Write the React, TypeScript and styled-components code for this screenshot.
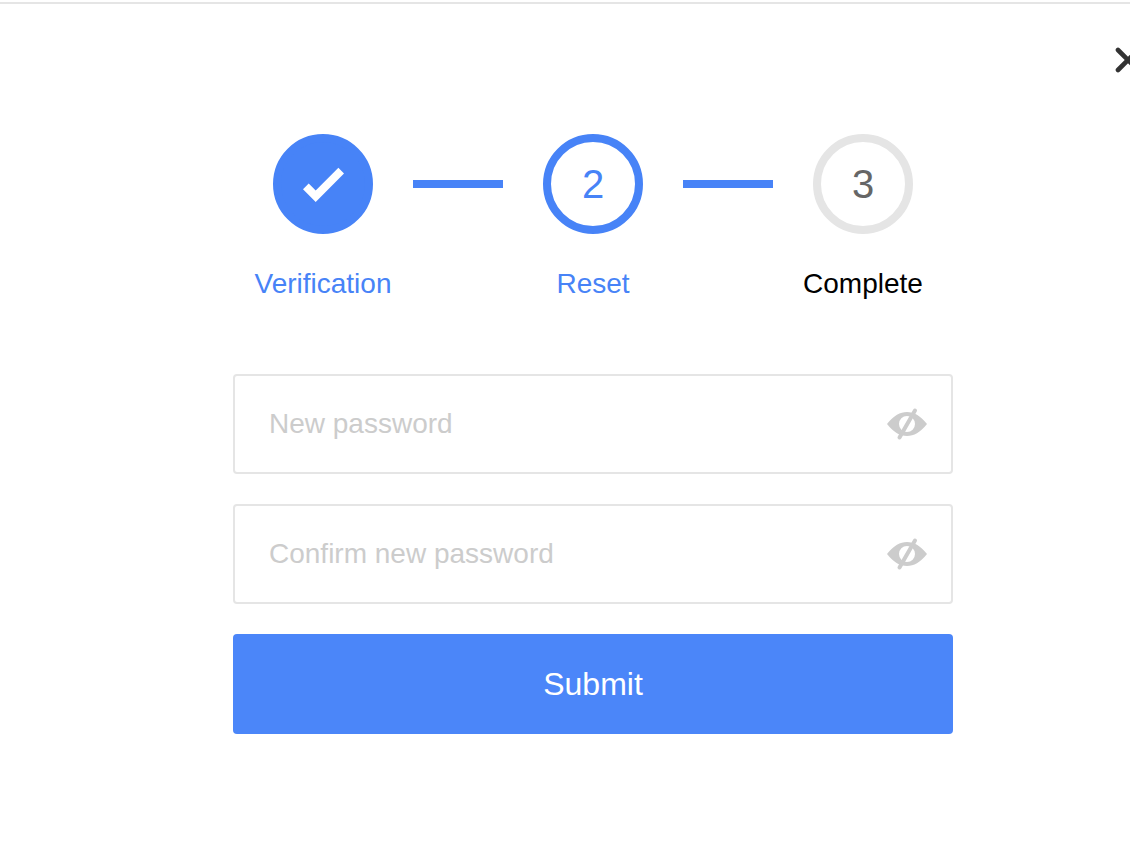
import React, { useState } from "react";
import styled, { createGlobalStyle } from "styled-components";

const GlobalStyle = createGlobalStyle`
  *, *::before, *::after { box-sizing: border-box; }
  body {
    margin: 0;
    background: #fff;
    font-family: "Liberation Sans", Arial, sans-serif;
    overflow-x: hidden;
  }
`;

const blue = "#4783f7";
const line = "#e5e5e5";

const Page = styled.main`
  overflow: hidden;
  padding-top: 2px;
`;

const Dialog = styled.section`
  display: flex;
  flex-direction: column;
  width: calc(100% + 56px);
  padding-bottom: 112px;
  border-top: 2px solid ${line};
`;

const Header = styled.header`
  display: flex;
  justify-content: flex-end;
  padding: 40px 42px 0;
`;

const CloseButton = styled.button`
  display: flex;
  padding: 0;
  border: 0;
  background: none;
  color: #333;
  cursor: pointer;
`;

const Content = styled.div`
  width: 100%;
  max-width: 720px;
  margin: 58px auto 0;
`;

const Steps = styled.ol`
  display: grid;
  grid-template-columns: 2fr 1fr 2fr 1fr 2fr;
  margin: 0;
  padding: 0;
  list-style: none;
`;

const Step = styled.li<{ $active?: boolean }>`
  display: flex;
  flex-direction: column;
  align-items: center;
  gap: 32px;
  color: ${(p) => (p.$active ? blue : "#000")};
  font-size: 28px;
  line-height: 36px;
`;

const Marker = styled.span<{ $state: "done" | "current" | "next" }>`
  display: flex;
  align-items: center;
  justify-content: center;
  width: 100px;
  height: 100px;
  border: 8px solid ${(p) => (p.$state === "next" ? line : blue)};
  border-radius: 50%;
  background: ${(p) => (p.$state === "done" ? blue : "#fff")};
  color: ${(p) => (p.$state === "next" ? "#666" : blue)};
  font-size: 40px;
  line-height: 48px;
`;

const Connector = styled.li`
  height: 8px;
  margin-top: 46px;
  background: ${blue};
`;

const Form = styled.form`
  display: flex;
  flex-direction: column;
  gap: 30px;
  margin-top: 72px;
`;

const Field = styled.div`
  display: flex;
  align-items: center;
  height: 100px;
  padding: 0 24px 0 34px;
  border: 2px solid ${line};
  border-radius: 4px;
`;

const Input = styled.input`
  flex: 1;
  min-width: 0;
  height: 100%;
  padding: 0;
  border: 0;
  outline: 0;
  background: none;
  color: #333;
  font-family: inherit;
  font-size: 28px;

  &::placeholder {
    color: #ccc;
    opacity: 1;
  }
`;

const ToggleButton = styled.button`
  display: flex;
  padding: 0;
  border: 0;
  background: none;
  color: #ccc;
  cursor: pointer;
`;

const SubmitButton = styled.button`
  height: 100px;
  border: 0;
  border-radius: 4px;
  background: #4b86f9;
  color: #fff;
  font-family: inherit;
  font-size: 32px;
  cursor: pointer;
`;

function CheckIcon() {
  return (
    <svg width="42" height="36" viewBox="0 0 42 36" role="img" aria-label="Done">
      <path fill="#fff" d="M1 23.200 6.700 17.400 13.700 24.500 36.400 1.800 42 7.400 13.700 36z" />
    </svg>
  );
}

function CloseIcon() {
  return (
    <svg width="32" height="32" viewBox="0 0 32 32" aria-hidden="true">
      <path
        d="M6 6 26 26M26 6 6 26"
        stroke="currentColor"
        strokeWidth="4.600"
        strokeLinecap="round"
      />
    </svg>
  );
}

function EyeIcon({ slashed }: { slashed: boolean }) {
  return (
    <svg width="40" height="36" viewBox="0 0 40 36" aria-hidden="true">
      <path
        fill="currentColor"
        fillRule="evenodd"
        d="M0 18C7 9.500 13 6 20 6S33 9.500 40 18C33 26.500 27 30 20 30S7 26.500 0 18zM20 10a8 8 0 1 0 0 16 8 8 0 0 0 0-16z"
      />
      {slashed && (
        <path d="M28 4.500 12.500 31.500" stroke="currentColor" strokeWidth="4" strokeLinecap="round" />
      )}
    </svg>
  );
}

function PasswordField({ label, name }: { label: string; name: string }) {
  const [visible, setVisible] = useState(false);
  return (
    <Field>
      <Input
        type={visible ? "text" : "password"}
        name={name}
        placeholder={label}
        aria-label={label}
        autoComplete="new-password"
      />
      <ToggleButton
        type="button"
        aria-label={visible ? "Hide password" : "Show password"}
        onClick={() => setVisible(!visible)}
      >
        <EyeIcon slashed={!visible} />
      </ToggleButton>
    </Field>
  );
}

export default function App() {
  return (
    <Page>
      <GlobalStyle />
      <Dialog>
        <Header>
          <CloseButton type="button" aria-label="Close">
            <CloseIcon />
          </CloseButton>
        </Header>
        <Content>
          <Steps>
            <Step $active>
              <Marker $state="done">
                <CheckIcon />
              </Marker>
              Verification
            </Step>
            <Connector aria-hidden="true" />
            <Step $active aria-current="step">
              <Marker $state="current">2</Marker>
              Reset
            </Step>
            <Connector aria-hidden="true" />
            <Step>
              <Marker $state="next">3</Marker>
              Complete
            </Step>
          </Steps>
          <Form onSubmit={(e) => e.preventDefault()}>
            <PasswordField label="New password" name="password" />
            <PasswordField label="Confirm new password" name="confirmation" />
            <SubmitButton type="submit">Submit</SubmitButton>
          </Form>
        </Content>
      </Dialog>
    </Page>
  );
}
